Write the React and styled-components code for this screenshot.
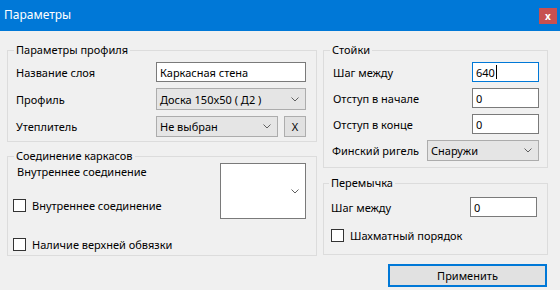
import React from 'react';
import styled, { createGlobalStyle } from 'styled-components';

const GlobalStyle = createGlobalStyle`
  html, body {
    margin: 0;
    padding: 0;
    background: #f0f0f0;
  }
  body {
    font-family: "Noto Sans", "Liberation Sans", sans-serif;
    font-size: 11px;
    color: #000;
  }
`;

const Chevron = () => (
  <svg width="8" height="5" viewBox="0 0 8 5">
    <polyline points="0.5,0.5 4,4 7.5,0.5" fill="none" stroke="#606060" strokeWidth="1" />
  </svg>
);

export default function App() {
  return (
    <Window>
      <GlobalStyle />
      <TitleBar>
        <Title>Параметры</Title>
        <CloseButton>x</CloseButton>
      </TitleBar>
      <Body>
        <Column>
          <Group>
            <Legend>Параметры профиля</Legend>
            <GroupInner $pad="2px 10px 2px 8px">
              <FormRow $label={140}>
                <Label>Название слоя</Label>
                <TextBox>Каркасная стена</TextBox>
              </FormRow>
              <FormRow $label={140}>
                <Label>Профиль</Label>
                <Combo $h={22}>
                  <ComboText>Доска 150x50 ( Д2 )</ComboText>
                  <Chevron />
                </Combo>
              </FormRow>
              <FormRow $label={140}>
                <Label>Утеплитель</Label>
                <InlineControls>
                  <Combo $h={21}>
                    <ComboText>Не выбран</ComboText>
                    <Chevron />
                  </Combo>
                  <SmallButton>X</SmallButton>
                </InlineControls>
              </FormRow>
            </GroupInner>
          </Group>

          <Group $gap={7}>
            <Legend>Соединение каркасов</Legend>
            <JoinGrid>
              <JoinOptions>
                <PlainLabel>Внутреннее соединение</PlainLabel>
                <CheckRow $gap={18}>
                  <CheckBox />
                  <span>Внутреннее соединение</span>
                </CheckRow>
                <CheckRow $gap={26}>
                  <CheckBox />
                  <span>Наличие верхней обвязки</span>
                </CheckRow>
              </JoinOptions>
              <DropBox>
                <Chevron />
              </DropBox>
            </JoinGrid>
          </Group>
        </Column>

        <Column>
          <Group>
            <Legend>Стойки</Legend>
            <GroupInner $pad="2px 8px 4px 9px">
              <SplitRow>
                <Label>Шаг между</Label>
                <TextBox $w={67} $focused>
                  640
                  <Caret />
                </TextBox>
              </SplitRow>
              <SplitRow>
                <Label>Отступ в начале</Label>
                <TextBox $w={67}>0</TextBox>
              </SplitRow>
              <SplitRow>
                <Label>Отступ в конце</Label>
                <TextBox $w={67}>0</TextBox>
              </SplitRow>
              <SplitRow>
                <Label $shift={-1}>Финский ригель</Label>
                <Combo $w={112} $h={21}>
                  <ComboText>Снаружи</ComboText>
                  <Chevron />
                </Combo>
              </SplitRow>
            </GroupInner>
          </Group>

          <Group $gap={8}>
            <Legend $indent={5}>Перемычка</Legend>
            <GroupInner $pad="0 10px 12px 7px">
              <LintelRow>
                <Label>Шаг между</Label>
                <TextBox $w={67}>0</TextBox>
              </LintelRow>
              <CheckRow $gap={12}>
                <CheckBox />
                <span>Шахматный порядок</span>
              </CheckRow>
            </GroupInner>
          </Group>

          <ApplyButton>Применить</ApplyButton>
        </Column>
      </Body>
    </Window>
  );
}

const Window = styled.div`
  width: 560px;
  height: 290px;
  background: #f0f0f0;
  display: flex;
  flex-direction: column;
  overflow: hidden;
`;

const TitleBar = styled.div`
  flex: none;
  height: 31px;
  background: #0078d7;
  color: #fff;
  display: flex;
  align-items: center;
  padding: 0 3px 0 4px;
  font-size: 12px;
`;

const Title = styled.span`
  flex: 1;
  padding-bottom: 2px;
`;

const CloseButton = styled.div`
  width: 18px;
  height: 16px;
  background: #c75050;
  color: #fff;
  font-size: 10px;
  font-weight: bold;
  line-height: 14px;
  display: flex;
  align-items: center;
  justify-content: center;
  margin-top: 1px;
`;

const Body = styled.div`
  display: grid;
  grid-template-columns: 310px 225px;
  column-gap: 6px;
  align-items: start;
  padding: 12px 0 0 7px;
`;

const Column = styled.div`
  display: flex;
  flex-direction: column;
`;

const Group = styled.fieldset`
  margin: ${(p) => p.$gap || 0}px 0 0;
  padding: 0;
  border: 1px solid #dcdcdc;
  min-width: 0;
`;

const Legend = styled.legend`
  margin-left: ${(p) => p.$indent ?? 6}px;
  padding: 0 2px;
  line-height: 14px;
`;

const GroupInner = styled.div`
  display: flex;
  flex-direction: column;
  padding: ${(p) => p.$pad};
`;

const FormRow = styled.div`
  display: grid;
  grid-template-columns: ${(p) => p.$label}px 1fr;
  align-items: center;
  height: 26px;

  & + & {
    margin-top: 1px;
  }
`;

const SplitRow = styled.div`
  display: flex;
  align-items: center;
  justify-content: space-between;
  height: 26px;
`;

const LintelRow = styled(SplitRow)`
  height: 20px;
  margin-top: 7px;
`;

const Label = styled.span`
  white-space: nowrap;
  margin-left: ${(p) => p.$shift || 0}px;
`;

const TextBox = styled.div`
  box-sizing: border-box;
  width: ${(p) => (p.$w ? `${p.$w}px` : '100%')};
  height: 20px;
  background: #fff;
  border: 1px solid ${(p) => (p.$focused ? '#0078d7' : '#7a7a7a')};
  padding: 0 3px;
  display: flex;
  align-items: center;
  white-space: nowrap;
`;

const Caret = styled.span`
  display: inline-block;
  width: 1px;
  height: 14px;
  background: #000;
  margin-left: 1px;
`;

const Combo = styled.div`
  box-sizing: border-box;
  width: ${(p) => (p.$w ? `${p.$w}px` : '100%')};
  height: ${(p) => p.$h}px;
  background: #e5e5e5;
  border: 1px solid #acacac;
  padding: 0 6px 0 3px;
  display: flex;
  align-items: center;
  flex: ${(p) => (p.$w ? 'none' : '1')};
`;

const ComboText = styled.span`
  flex: 1;
  white-space: nowrap;
`;

const InlineControls = styled.div`
  display: flex;
  align-items: center;
  gap: 6px;
`;

const SmallButton = styled.div`
  box-sizing: border-box;
  flex: none;
  width: 22px;
  height: 21px;
  background: #e1e1e1;
  border: 1px solid #adadad;
  display: flex;
  align-items: center;
  justify-content: center;
`;

const JoinGrid = styled.div`
  display: grid;
  grid-template-columns: 1fr 86px;
  align-items: start;
  padding: 0 10px 4px 5px;
`;

const JoinOptions = styled.div`
  display: flex;
  flex-direction: column;
`;

const PlainLabel = styled.span`
  margin-left: 4px;
  line-height: 18px;
`;

const CheckRow = styled.div`
  display: flex;
  align-items: center;
  gap: 6px;
  height: 13px;
  margin-top: ${(p) => p.$gap}px;
`;

const CheckBox = styled.span`
  box-sizing: border-box;
  flex: none;
  width: 13px;
  height: 13px;
  background: #fff;
  border: 1px solid #333;
`;

const DropBox = styled.div`
  box-sizing: border-box;
  height: 56px;
  background: #fff;
  border: 1px solid #7a7a7a;
  display: flex;
  align-items: center;
  justify-content: flex-end;
  padding-right: 6px;
`;

const ApplyButton = styled.div`
  box-sizing: border-box;
  align-self: flex-end;
  width: 159px;
  height: 23px;
  margin: 9px 1px 0 0;
  background: #e1e1e1;
  border: 2px solid #0078d7;
  display: flex;
  align-items: center;
  justify-content: center;
`;
